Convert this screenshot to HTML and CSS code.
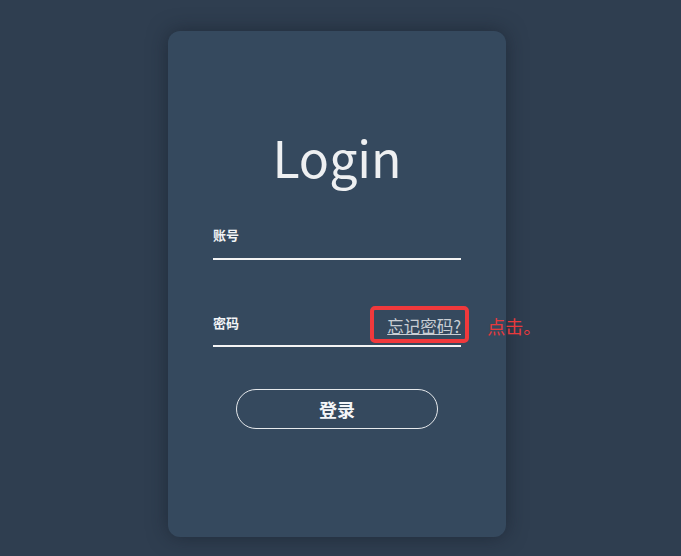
FILE: index.html
```html
<!DOCTYPE html>
<html lang="zh">
<head>
<meta charset="utf-8">
<title>Login</title>
<link rel="stylesheet" href="styles.css">
</head>
<body>
<div class="page">
  <div class="card">
    <h1 class="title">Login</h1>
    <div class="field">
      <div class="label-row"><label class="label">账号</label></div>
      <div class="input"></div>
    </div>
    <div class="field field-pw">
      <div class="label-row">
        <label class="label">密码</label>
        <span class="forgot-wrap">
          <a class="forgot" href="#">忘记密码?</a>
          <span class="highlight"></span>
          <span class="note">点击。</span>
        </span>
      </div>
      <div class="input"></div>
    </div>
    <button class="btn">登录</button>
  </div>
</div>
</body>
</html>
```

FILE: styles.css
```css
html, body {
  margin: 0;
  padding: 0;
  height: 100%;
  background: #2f3e50;
  font-family: "Noto Sans CJK SC", "Noto Sans", sans-serif;
}
.page {
  padding: 31px 0 0 168px;
}
.card {
  width: 338px;
  height: 506px;
  box-sizing: border-box;
  background: #35495e;
  border-radius: 12px;
  box-shadow: 0 0 20px rgba(20, 28, 38, 0.55);
  padding: 95px 45px 0;
  display: flex;
  flex-direction: column;
}
.title {
  margin: 0;
  font-size: 50px;
  line-height: 60px;
  font-weight: 400;
  color: #eef0f2;
  text-align: center;
}
.field {
  margin-top: 37px;
}
.field-pw {
  margin-top: 51px;
}
.label-row {
  display: flex;
  justify-content: space-between;
  align-items: flex-end;
  height: 20px;
}
.label {
  font-size: 13px;
  font-weight: 700;
  color: #f2f4f6;
  line-height: 16px;
}
.input {
  margin-top: 15px;
  height: 0;
  border-bottom: 2px solid #f4f4f4;
}
.field-pw .input {
  margin-top: 14px;
}
.forgot-wrap {
  position: relative;
  display: inline-block;
}
.forgot {
  font-size: 16.5px;
  line-height: 20px;
  color: #c9ced4;
  text-decoration: underline;
  display: block;
  margin-bottom: -5px;
}
.highlight {
  position: absolute;
  left: -17px;
  right: -8px;
  top: -10px;
  bottom: -12px;
  border: 4px solid #f0393c;
  border-radius: 5px;
}
.note {
  position: absolute;
  left: 100px;
  top: -1px;
  white-space: nowrap;
  color: #e8393c;
  font-size: 18px;
  line-height: 22px;
}
.btn {
  margin: 42px auto 0;
  width: 202px;
  height: 40px;
  border: 1px solid #e6e9ec;
  border-radius: 20px;
  background: transparent;
  color: #f4f6f8;
  font-family: inherit;
  font-size: 18px;
  font-weight: 700;
  padding: 0;
}
```
